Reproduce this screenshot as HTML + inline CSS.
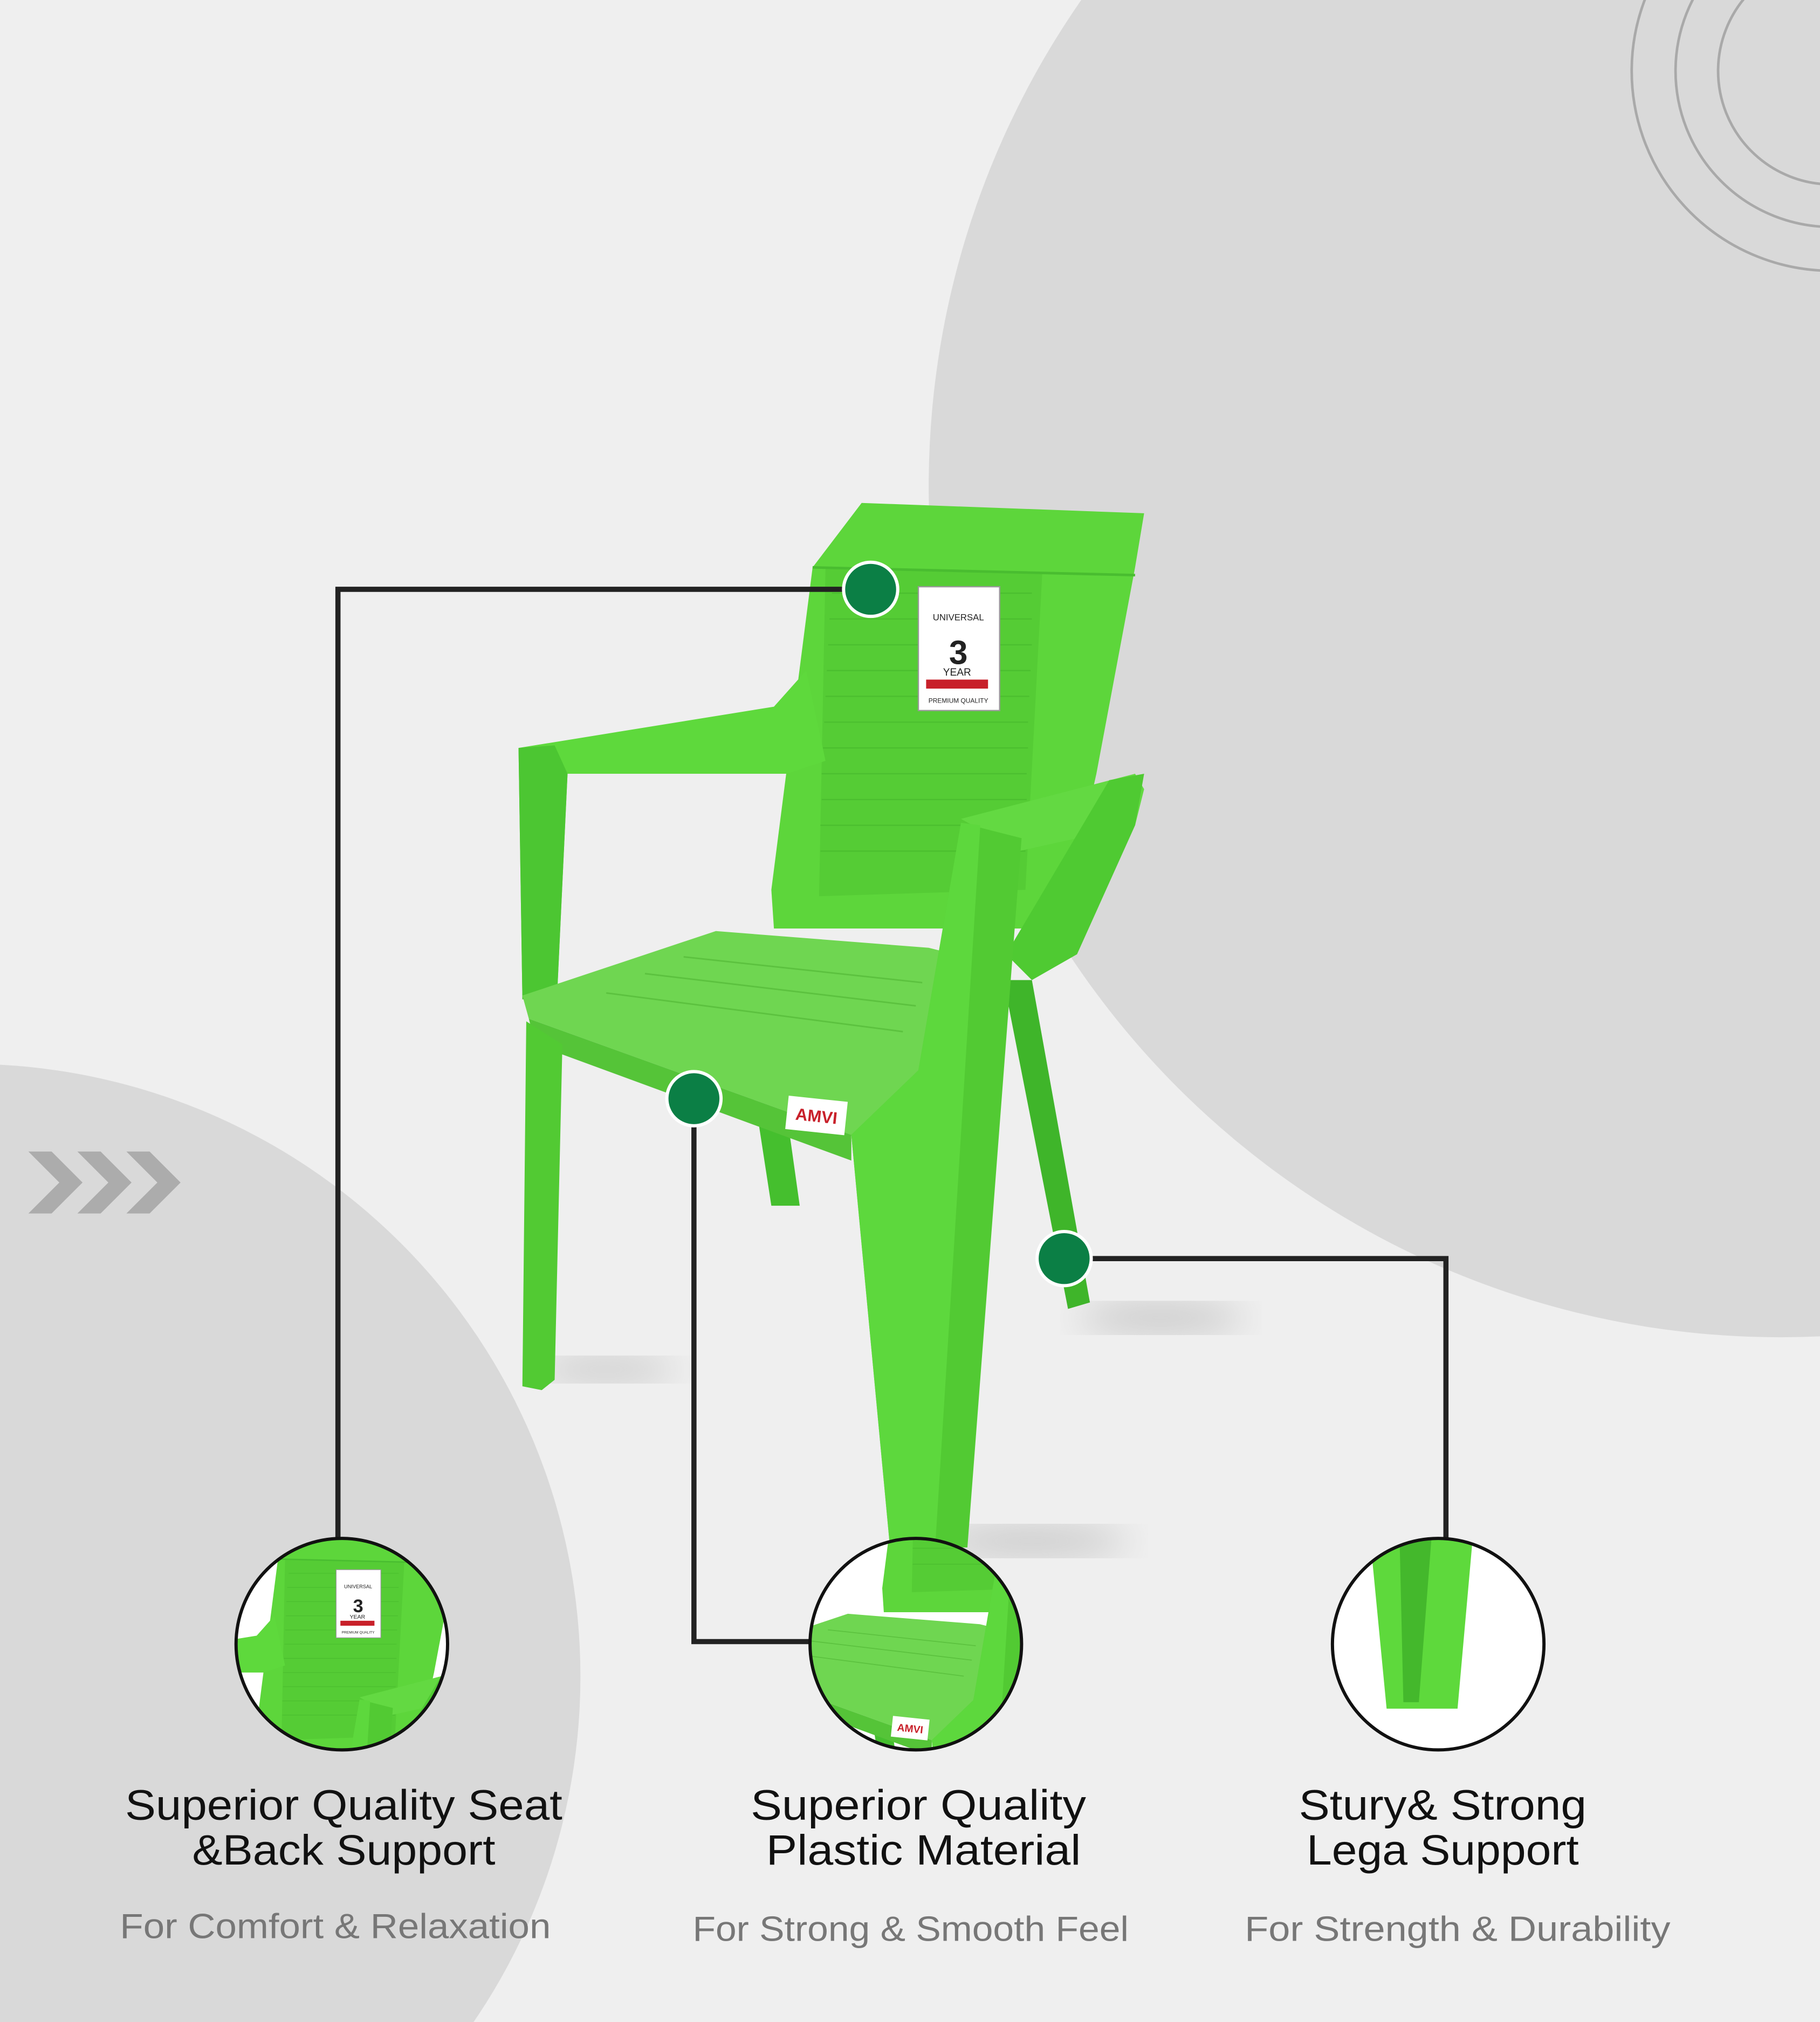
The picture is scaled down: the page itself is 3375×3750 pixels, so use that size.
<!DOCTYPE html>
<html><head><meta charset="utf-8"><style>html,body{margin:0;padding:0;background:#efefef;width:3375px;height:3750px;overflow:hidden}svg{display:block}</style></head>
<body>
<svg width="3375" height="3750" viewBox="0 0 1411 1568" preserveAspectRatio="none" xmlns="http://www.w3.org/2000/svg" font-family="Liberation Sans, sans-serif">
<defs>
<g id="chair">
  <polygon points="588,870 612,878 620,935 598,935" fill="#45bf2e"/>
  <polygon points="778,760 800,760 845,1010 828,1015" fill="#3fb52a"/>
  <polygon points="668,390 887,398 880,440 850,600 830,690 795,720 600,720 598,690 630,440" fill="#5dd63b"/>
  <polygon points="640,440 808,445 795,690 635,695" fill="#55cc35"/>
  <g stroke="#46b82c" stroke-width="1" opacity="0.6">
    <path d="M645,460 L800,460 M643,480 L800,480 M642,500 L800,500 M641,520 L799,520 M640,540 L798,540 M639,560 L797,560 M638,580 L797,580 M637,600 L796,600 M637,620 L796,620 M636,640 L795,640 M636,660 L795,660"/>
  </g>
  <line x1="630" y1="440" x2="880" y2="446" stroke="#49bd30" stroke-width="2"/>
  <rect x="712" y="455" width="63" height="96" fill="#fff" stroke="#999" stroke-width="1"/>
  <text x="743" y="515" font-size="26" font-weight="bold" text-anchor="middle" fill="#222">3</text>
  <text x="743" y="481" font-size="7" text-anchor="middle" fill="#222">UNIVERSAL</text>
  <text x="742" y="524" font-size="8" text-anchor="middle" fill="#222">YEAR</text>
  <rect x="718" y="527" width="48" height="7" fill="#c8202a"/>
  <text x="743" y="545" font-size="5" text-anchor="middle" fill="#222">PREMIUM QUALITY</text>
  <polygon points="402,580 600,548 625,520 640,590 610,600 440,600 432,770 405,775" fill="#5ed93c"/>
  <polygon points="402,580 430,578 440,600 432,770 405,775" fill="#4cc632"/>
  <polygon points="405,772 555,722 720,735 760,745 730,830 660,880 410,790" fill="#6fd651"/>
  <polygon points="410,790 660,880 660,900 415,810" fill="#55c438"/>
  <g stroke="#5cc23f" stroke-width="1.2" fill="none">
    <path d="M470,770 L700,800 M500,755 L710,780 M530,742 L715,762"/>
  </g>
  <polygon points="408,792 436,810 430,1070 420,1078 405,1075" fill="#52ca33"/>
  <rect x="610" y="852" width="46" height="26" fill="#fff" transform="rotate(6 633 865)"/>
  <text x="633" y="870" font-size="13" font-weight="bold" text-anchor="middle" fill="#c8202a" transform="rotate(6 633 865)">AMVI</text>
  <polygon points="745,635 880,600 887,612 880,640 790,660" fill="#63d942"/>
  <polygon points="860,605 887,600 880,640 835,740 800,760 780,740" fill="#4fca32"/>
  <polygon points="745,638 792,650 750,1200 690,1200 660,880 712,830" fill="#52ca33"/>
  <polygon points="712,830 745,638 760,640 725,1200 690,1200 660,880" fill="#5dd83d"/>
</g>
<clipPath id="c1"><circle cx="265" cy="1275" r="82"/></clipPath>
<clipPath id="c2"><circle cx="710" cy="1275" r="82"/></clipPath>
<clipPath id="c3"><circle cx="1115" cy="1275" r="82"/></clipPath>
<filter id="bl"><feGaussianBlur stdDeviation="14"/></filter>
</defs>

<rect width="1411" height="1568" fill="#efefef"/>
<circle cx="1380" cy="377" r="660" fill="#d9d9d9"/>
<g fill="none" stroke="#a9a9a9" stroke-width="2">
  <circle cx="1420" cy="55" r="155"/>
  <circle cx="1420" cy="55" r="121"/>
  <circle cx="1420" cy="55" r="88"/>
</g>
<circle cx="-25" cy="1300" r="475" fill="#d9d9d9"/>
<g fill="#acacac">
  <polygon points="22,893 40,893 64,917 40,941 22,941 46,917"/>
  <polygon points="60,893 78,893 102,917 78,941 60,941 84,917"/>
  <polygon points="98,893 116,893 140,917 116,941 98,941 122,917"/>
</g>

<ellipse cx="470" cy="1062" rx="55" ry="9" fill="#c4c4c4" filter="url(#bl)"/>
<ellipse cx="900" cy="1022" rx="65" ry="11" fill="#c4c4c4" filter="url(#bl)"/>
<ellipse cx="800" cy="1195" rx="75" ry="11" fill="#c4c4c4" filter="url(#bl)"/>

<use href="#chair"/>

<g fill="none" stroke="#222" stroke-width="4">
  <polyline points="262,1193 262,457 675,457"/>
  <polyline points="538,852 538,1273 630,1273"/>
  <polyline points="825,976 1121,976 1121,1193"/>
</g>
<g fill="#0b7f45" stroke="#fff" stroke-width="2.5">
  <circle cx="675" cy="457" r="21"/>
  <circle cx="538" cy="852" r="21"/>
  <circle cx="825" cy="976" r="21"/>
</g>

<circle cx="265" cy="1275" r="82" fill="#fff"/>
<g clip-path="url(#c1)"><g transform="translate(265,1275) scale(0.55) translate(-720,-560)"><use href="#chair"/></g></g>
<circle cx="265" cy="1275" r="82" fill="none" stroke="#111" stroke-width="2.5"/>

<circle cx="710" cy="1275" r="82" fill="#fff"/>
<g clip-path="url(#c2)"><g transform="translate(710,1275) scale(0.62) translate(-640,-760)"><use href="#chair"/></g></g>
<circle cx="710" cy="1275" r="82" fill="none" stroke="#111" stroke-width="2.5"/>

<circle cx="1115" cy="1275" r="82" fill="#fff"/>
<g clip-path="url(#c3)">
  <polygon points="1062,1190 1142,1190 1130,1325 1075,1325" fill="#5ed93c"/>
  <polygon points="1085,1190 1110,1190 1100,1320 1088,1320" fill="#44b82c"/>
</g>
<circle cx="1115" cy="1275" r="82" fill="none" stroke="#111" stroke-width="2.5"/>

<g fill="#111" font-size="33">
  <text x="97" y="1411" textLength="339" lengthAdjust="spacingAndGlyphs">Superior Quality Seat</text>
  <text x="149" y="1446" textLength="235" lengthAdjust="spacingAndGlyphs">&amp;Back Support</text>
  <text x="582" y="1411" textLength="260" lengthAdjust="spacingAndGlyphs">Superior Quality</text>
  <text x="594" y="1446" textLength="244" lengthAdjust="spacingAndGlyphs">Plastic Material</text>
  <text x="1007" y="1411" textLength="223" lengthAdjust="spacingAndGlyphs">Stury&amp; Strong</text>
  <text x="1013" y="1446" textLength="211" lengthAdjust="spacingAndGlyphs">Lega Support</text>
</g>
<g fill="#777" font-size="27">
  <text x="93" y="1503" textLength="334" lengthAdjust="spacingAndGlyphs">For Comfort &amp; Relaxation</text>
  <text x="537" y="1505" textLength="338" lengthAdjust="spacingAndGlyphs">For Strong &amp; Smooth Feel</text>
  <text x="965" y="1505" textLength="330" lengthAdjust="spacingAndGlyphs">For Strength &amp; Durability</text>
</g>
</svg>
</body></html>
